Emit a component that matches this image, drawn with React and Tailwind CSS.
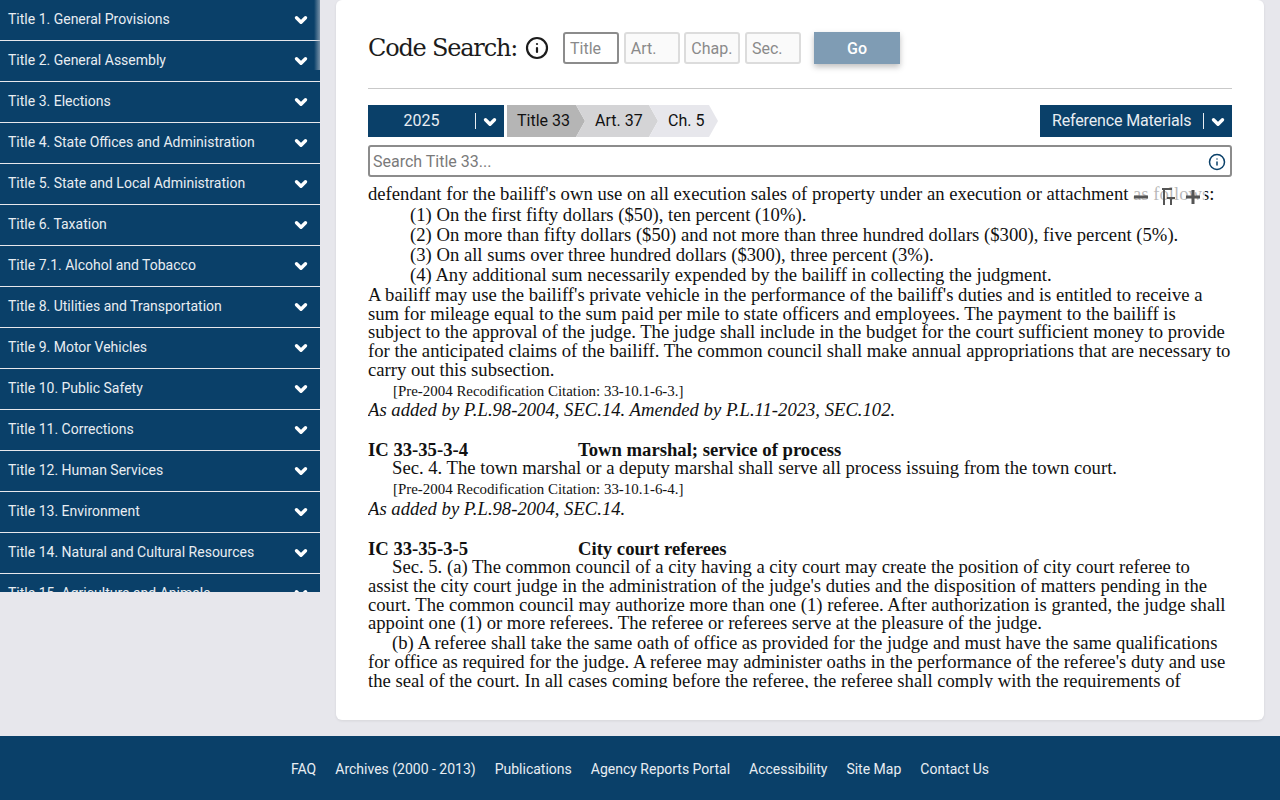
import { ChevronDown, Info } from 'lucide-react'

const titles = [
  'Title 1. General Provisions',
  'Title 2. General Assembly',
  'Title 3. Elections',
  'Title 4. State Offices and Administration',
  'Title 5. State and Local Administration',
  'Title 6. Taxation',
  'Title 7.1. Alcohol and Tobacco',
  'Title 8. Utilities and Transportation',
  'Title 9. Motor Vehicles',
  'Title 10. Public Safety',
  'Title 11. Corrections',
  'Title 12. Human Services',
  'Title 13. Environment',
  'Title 14. Natural and Cultural Resources',
  'Title 15. Agriculture and Animals',
]

const footerLinks = ['FAQ', 'Archives (2000 - 2013)', 'Publications', 'Agency Reports Portal', 'Accessibility', 'Site Map', 'Contact Us']

function Chevron() {
  return <ChevronDown size={18} strokeWidth={4.5} className="text-white shrink-0 mt-[2px]" />
}

function CodeInput({ label, active }) {
  return (
    <div className={`w-[56px] h-[32px] rounded-[3px] border-2 flex items-center px-[5px] pt-[1px] text-[16px] text-[#8a8a8a] ${active ? 'border-[#8c8c8c] bg-white' : 'border-[#dcdcdc] bg-[#fafafa]'}`}>
      {label}
    </div>
  )
}

function FontControls() {
  return (
    <div className="absolute left-[764px] top-0 w-[73px] h-[20px] bg-white/70">
      <svg width="73" height="20" viewBox="0 0 73 20" fill="none" stroke="#555" className="block">
        <path d="M2 12h14" strokeWidth="3" />
        <path d="M30 4h10M32 4v16" strokeWidth="2" />
        <path d="M35 13h8M39 13v7" strokeWidth="2" />
        <path d="M54 12h14M61 5v14" strokeWidth="3" />
      </svg>
    </div>
  )
}

export default function App() {
  return (
    <div className="w-[1280px] h-[800px] overflow-hidden bg-[#e7e7ec] flex flex-col font-['Roboto',sans-serif]">
      <div className="h-[736px] shrink-0 flex items-start">
        <aside className="relative w-[320px] h-[592px] overflow-hidden bg-[#0a4069] shrink-0">
          {titles.map((t) => (
            <div key={t} className="h-[41px] border-b border-[#e7e7ec] flex items-center justify-between pl-[8px] pr-[10px] pb-[2px] text-[14px] text-[#e8edf2]">
              <span>{t}</span>
              <Chevron />
            </div>
          ))}
          <div className="absolute right-0 top-0 w-[6px] h-[70px] bg-gradient-to-r from-transparent to-[#a9b6c4]/70" />
        </aside>

        <main className="ml-[16px] w-[928px] h-[720px] bg-white rounded-[6px] shadow-[0_1px_3px_rgba(0,0,0,0.08)] px-[32px] flex flex-col">
          <div className="h-[89px] shrink-0 border-b border-[#c9c9c9] flex items-start pt-[32px]">
            <h1 className="font-['DejaVu_Serif',serif] text-[24px] leading-[32px] text-[#1c1c1c] tracking-[-1.2px]">Code Search:</h1>
            <Info size={24} strokeWidth={2.2} className="ml-[8px] mt-[4px] text-[#1c1c1c]" />
            <div className="flex gap-[4.67px] ml-[14px]">
              <CodeInput label="Title" active />
              <CodeInput label="Art." />
              <CodeInput label="Chap." />
              <CodeInput label="Sec." />
            </div>
            <div className="ml-[13px] w-[86px] h-[32px] pt-[1px] bg-[#7f9cb4] text-white font-medium text-[16px] flex items-center justify-center shadow-[0_3px_6px_rgba(0,0,0,0.25)]">Go</div>
          </div>

          <div className="mt-[16px] flex justify-between shrink-0">
            <div className="flex">
              <div className="w-[136px] h-[32px] bg-[#0a4069] text-[#e8edf2] text-[16px] flex items-center mr-[3px]">
                <span className="w-[107px] text-center">2025</span>
                <span className="w-px h-[16px] bg-[#e8edf2]" />
                <span className="flex-1 flex justify-center"><Chevron /></span>
              </div>
              <div className="w-[78px] h-[32px] flex items-center pl-[10px] text-[16px] text-[#111] bg-[#b5b5b5] [clip-path:polygon(0_0,calc(100%-9px)_0,100%_50%,calc(100%-9px)_100%,0_100%)]">Title 33</div>
              <div className="w-[82px] h-[32px] -ml-[9px] flex items-center pl-[19px] text-[16px] text-[#111] bg-[#d4d4d6] [clip-path:polygon(0_0,calc(100%-9px)_0,100%_50%,calc(100%-9px)_100%,0_100%,9px_50%)]">Art. 37</div>
              <div className="w-[69px] h-[32px] -ml-[9px] flex items-center pl-[19px] text-[16px] text-[#111] bg-[#e7e7ec] [clip-path:polygon(0_0,calc(100%-9px)_0,100%_50%,calc(100%-9px)_100%,0_100%,9px_50%)]">Ch. 5</div>
            </div>
            <div className="w-[192px] h-[32px] bg-[#0a4069] text-[#e8edf2] text-[16px] tracking-[-0.15px] flex items-center pl-[12px]">
              <span className="w-[151px]">Reference Materials</span>
              <span className="w-px h-[16px] bg-[#e8edf2]" />
              <span className="flex-1 flex justify-center"><Chevron /></span>
            </div>
          </div>

          <div className="mt-[8px] h-[32px] shrink-0 rounded-[3px] border-2 border-[#8c8c8c] flex items-center justify-between pl-[3px] pr-[4px] pt-[1px] text-[16px] text-[#7a7a7a]">
            <span>Search Title 33...</span>
            <Info size={18} strokeWidth={2} className="text-[#0a4069]" />
          </div>

          <div className="relative mt-[8px] h-[503px] overflow-hidden font-['Liberation_Serif',serif] text-[18.67px] leading-[18.67px] text-[#111]">
            <FontControls />
            <p>defendant for the bailiff's own use on all execution sales of property under an execution or attachment as follows:</p>
            <div className="pl-[42px] leading-[20px] mt-[1.3px] mb-[1px]">
              <p>(1) On the first fifty dollars ($50), ten percent (10%).</p>
              <p>(2) On more than fifty dollars ($50) and not more than three hundred dollars ($300), five percent (5%).</p>
              <p>(3) On all sums over three hundred dollars ($300), three percent (3%).</p>
              <p>(4) Any additional sum necessarily expended by the bailiff in collecting the judgment.</p>
            </div>
            <p>A bailiff may use the bailiff's private vehicle in the performance of the bailiff's duties and is entitled to receive a sum for mileage equal to the sum paid per mile to state officers and employees. The payment to the bailiff is subject to the approval of the judge. The judge shall include in the budget for the court sufficient money to provide for the anticipated claims of the bailiff. The common council shall make annual appropriations that are necessary to carry out this subsection.</p>
            <p className="pl-[25px] text-[14.93px] leading-[17px] mt-[3.5px]">[Pre-2004 Recodification Citation: 33-10.1-6-3.]</p>
            <p className="italic leading-[20px]">As added by P.L.98-2004, SEC.14. Amended by P.L.11-2023, SEC.102.</p>

            <p className="font-bold mt-[21px] flex"><span className="w-[210px]">IC 33-35-3-4</span><span>Town marshal; service of process</span></p>
            <p className="pl-[24px] -mt-[0.7px]">Sec. 4. The town marshal or a deputy marshal shall serve all process issuing from the town court.</p>
            <p className="pl-[25px] text-[14.93px] leading-[17px] mt-[4px]">[Pre-2004 Recodification Citation: 33-10.1-6-4.]</p>
            <p className="italic leading-[22px]">As added by P.L.98-2004, SEC.14.</p>

            <p className="font-bold mt-[20px] flex"><span className="w-[210px]">IC 33-35-3-5</span><span>City court referees</span></p>
            <p className="indent-[24px] -mt-[1px]">Sec. 5. (a) The common council of a city having a city court may create the position of city court referee to assist the city court judge in the administration of the judge's duties and the disposition of matters pending in the court. The common council may authorize more than one (1) referee. After authorization is granted, the judge shall appoint one (1) or more referees. The referee or referees serve at the pleasure of the judge.</p>
            <p className="indent-[24px] mt-[1.5px]">(b) A referee shall take the same oath of office as provided for the judge and must have the same qualifications for office as required for the judge. A referee may administer oaths in the performance of the referee's duty and use the seal of the court. In all cases coming before the referee, the referee shall comply with the requirements of</p>
          </div>
        </main>
      </div>

      <footer className="flex-1 bg-[#0a4069] text-[#e8edf2] text-[14px] flex justify-center gap-[19px] pt-[23px]">
        {footerLinks.map((l) => <span key={l}>{l}</span>)}
      </footer>
    </div>
  )
}
